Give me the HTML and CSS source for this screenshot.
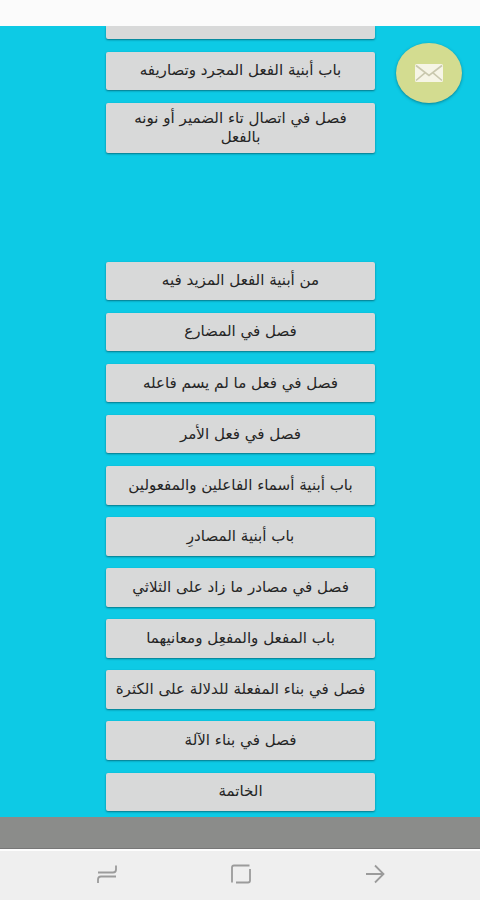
FILE: index.html
```
<!DOCTYPE html>
<html lang="ar" dir="rtl">
<head>
    <meta charset="UTF-8">
    <meta name="viewport" content="width=device-width, initial-scale=1.0">
    <title>الأبواب</title>
    <link rel="stylesheet" href="styles.css">
</head>
<body>
    <!-- Status bar -->
    <header class="status-bar"></header>

    <main class="content">
        <!-- Chapter list -->
        <div class="chapters">
            <button class="chapter cut"></button>
            <button class="chapter">باب أبنية الفعل المجرد وتصاريفه</button>
            <button class="chapter tall">فصل في اتصال تاء الضمير أو نونه<br>بالفعل</button>
        </div>
        <div class="chapters second">
            <button class="chapter">من أبنية الفعل المزيد فيه</button>
            <button class="chapter">فصل في المضارع</button>
            <button class="chapter">فصل في فعل ما لم يسم فاعله</button>
            <button class="chapter">فصل في فعل الأمر</button>
            <button class="chapter">باب أبنية أسماء الفاعلين والمفعولين</button>
            <button class="chapter">باب أبنية المصادرِ</button>
            <button class="chapter">فصل في مصادر ما زاد على الثلاثي</button>
            <button class="chapter">باب المفعل والمفعِل ومعانيهما</button>
            <button class="chapter">فصل في بناء المفعلة للدلالة على الكثرة</button>
            <button class="chapter">فصل في بناء الآلة</button>
            <button class="chapter">الخاتمة</button>
        </div>

        <!-- Mail button -->
        <button class="mail">
            <svg width="30" height="20" viewBox="0 0 30 20">
                <rect x="1" y="1" width="28" height="18" rx="1.5" fill="#f6f5e6"/>
                <path d="M2 2.5 L15 12.5 L28 2.5 M2 17.5 L11 9.8 M28 17.5 L19 9.8" fill="none" stroke="#c9c8ae" stroke-width="1.6"/>
            </svg>
        </button>
    </main>

    <div class="ad-bar"></div>

    <!-- Navigation bar -->
    <nav class="nav-bar">
        <svg width="22" height="22" viewBox="0 0 22 22">
            <path d="M2 9.5 H17 Q20 9.5 20 6.5 V2.5 M20 13.5 H5 Q2 13.5 2 16.5 V20"/>
        </svg>
        <svg width="22" height="22" viewBox="0 0 22 22">
            <path d="M2 19.5 V4.5 Q2 2.5 4 2.5 H19.5 M20 6 V17.5 Q20 19.5 18 19.5 H6"/>
        </svg>
        <svg width="22" height="22" viewBox="0 0 22 22">
            <path d="M2 11 H19 M11 2.5 L19.5 11 L11 19.5"/>
        </svg>
    </nav>
</body>
</html>
```
FILE: styles.css
```
body {
    margin: 0;
    height: 900px;
    display: flex;
    flex-direction: column;
    overflow: hidden;
    font-family: "DejaVu Sans", sans-serif;
    background-color: #efefef;
}
.status-bar {
    height: 26px;
    background-color: #fbfbfb;
}
.content {
    position: relative;
    height: 791px;
    background-color: #0dcae5;
    overflow: hidden;
}
.chapters {
    width: 269px;
    margin: 0 105px 0 auto;
    display: flex;
    flex-direction: column;
    gap: 12.5px;
}
.chapters.second {
    margin-top: 108.5px;
}
.chapter {
    height: 38.6px;
    flex-shrink: 0;
    padding: 0;
    border: none;
    border-radius: 2px;
    background-color: #d8d9d9;
    box-shadow: 0 1px 2px rgba(0, 60, 70, 0.6);
    color: #252525;
    font-family: inherit;
    font-size: 15.1px;
    line-height: 19px;
    white-space: nowrap;
}
.chapter.cut {
    height: 13px;
    border-radius: 0 0 2px 2px;
}
.chapter.tall {
    height: 50.5px;
}
.mail {
    position: absolute;
    top: 17px;
    left: 396px;
    width: 66px;
    height: 60px;
    padding: 0;
    display: flex;
    align-items: center;
    justify-content: center;
    border: none;
    border-radius: 50%;
    background-color: #d3dc90;
    box-shadow: 0 1px 3px rgba(0, 60, 70, 0.5);
}
.ad-bar {
    height: 32px;
    background-color: #8b8c8a;
    border-bottom: 1px solid #777;
    box-sizing: border-box;
}
.nav-bar {
    height: 51px;
    box-sizing: border-box;
    border-top: 2px solid #fdfdfd;
    padding: 0 94px 4px 96px;
    display: flex;
    direction: ltr;
    justify-content: space-between;
    align-items: center;
}
.nav-bar path {
    fill: none;
    stroke: #9b9b9b;
    stroke-width: 1.8;
}
```
